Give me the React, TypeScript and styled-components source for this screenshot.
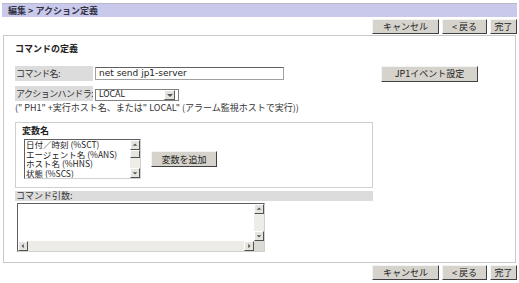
import styled, { createGlobalStyle } from "styled-components";

const GlobalStyle = createGlobalStyle`
  html, body {
    margin: 0;
    padding: 0;
    background: #ffffff;
  }
  body {
    font-family: "Noto Sans CJK JP", "DejaVu Sans", sans-serif;
    font-size: 9px;
    color: #333333;
  }
`;

const variables = ["日付／時刻 (%SCT)", "エージェント名 (%ANS)", "ホスト名 (%HNS)", "状態 (%SCS)"];

const Arrow = ({ dir }: { dir: "up" | "down" | "left" | "right" }) => {
  const pts = {
    up: "1,5 4,2 7,5",
    down: "1,3 4,6 7,3",
    left: "5,1 2,4 5,7",
    right: "3,1 6,4 3,7",
  }[dir];
  return (
    <svg width="8" height="8" viewBox="0 0 8 8">
      <polygon points={pts} fill="#555" />
    </svg>
  );
};

const ButtonBar = () => (
  <ButtonRow>
    <Button $w={67}>キャンセル</Button>
    <Button $w={45}>&lt; 戻る</Button>
    <Button $w={27}>完了</Button>
  </ButtonRow>
);

const App = () => {
  return (
    <Page>
      <GlobalStyle />
      <TitleBar>編集 &gt; アクション定義</TitleBar>
      <ButtonBar />
      <Panel>
        <SectionTitle>コマンドの定義</SectionTitle>
        <FieldRow $top={11}>
          <Label>コマンド名:</Label>
          <TextInput>net send jp1-server</TextInput>
          <Spacer />
          <Button $w={97} $h={16}>JP1イベント設定</Button>
        </FieldRow>
        <FieldRow $top={5}>
          <Label>アクションハンドラ:</Label>
          <Select>
            <span>LOCAL</span>
            <DropButton>
              <Arrow dir="down" />
            </DropButton>
          </Select>
        </FieldRow>
        <Note>(" PH1" +実行ホスト名、または" LOCAL" (アラーム監視ホストで実行))</Note>
        <VarBox>
          <VarTitle>変数名</VarTitle>
          <VarRow>
            <ListBox>
              <ListItems>
                {variables.map((v) => (
                  <ListItem key={v}>{v}</ListItem>
                ))}
              </ListItems>
              <VScroll>
                <ScrollBtn>
                  <Arrow dir="up" />
                </ScrollBtn>
                <Thumb />
                <Track />
                <ScrollBtn>
                  <Arrow dir="down" />
                </ScrollBtn>
              </VScroll>
            </ListBox>
            <Button $w={66} $h={16}>変数を追加</Button>
          </VarRow>
        </VarBox>
        <ArgLabel>コマンド引数:</ArgLabel>
        <TextArea>
          <TextAreaMain>
            <TextAreaBody />
            <VScroll>
              <ScrollBtn>
                <Arrow dir="up" />
              </ScrollBtn>
              <Track />
              <ScrollBtn>
                <Arrow dir="down" />
              </ScrollBtn>
            </VScroll>
          </TextAreaMain>
          <HScroll>
            <ScrollBtn>
              <Arrow dir="left" />
            </ScrollBtn>
            <Track />
            <ScrollBtn>
              <Arrow dir="right" />
            </ScrollBtn>
            <Corner />
          </HScroll>
        </TextArea>
      </Panel>
      <ButtonBar />
    </Page>
  );
};

export default App;

const Page = styled.div`
  width: 515px;
  padding: 3px 2px 0 2px;
`;

const TitleBar = styled.div`
  height: 14px;
  box-sizing: border-box;
  background: #c9c9ec;
  border-top: 1px solid #b8b8c8;
  padding-left: 6px;
  font-weight: bold;
  line-height: 13px;
  color: #333344;
`;

const ButtonRow = styled.div`
  display: flex;
  justify-content: flex-end;
  gap: 3px;
  margin-top: 2px;
  height: 15px;
`;

const Button = styled.div<{ $w: number; $h?: number }>`
  width: ${(p) => p.$w}px;
  height: ${(p) => p.$h ?? 15}px;
  box-sizing: border-box;
  background: #d6d3cc;
  border: 1px solid;
  border-color: #f4f4f4 #404040 #404040 #f4f4f4;
  display: flex;
  align-items: center;
  justify-content: center;
  color: #222;
  white-space: nowrap;
`;

const Panel = styled.div`
  margin: 1px 1px 0 1px;
  height: 228px;
  box-sizing: border-box;
  border: 1px solid #c8c8c8;
  padding: 0 11px;
`;

const SectionTitle = styled.div`
  margin-top: 7px;
  font-weight: bold;
  line-height: 12px;
  color: #222;
`;

const FieldRow = styled.div<{ $top: number }>`
  display: flex;
  align-items: center;
  margin-top: ${(p) => p.$top}px;
  height: 15px;
  padding-right: 26px;
`;

const Label = styled.div`
  width: 78px;
  height: 15px;
  flex: none;
  box-sizing: border-box;
  background: #dcdcdc;
  padding-left: 1px;
  line-height: 15px;
  letter-spacing: -0.6px;
  color: #333;
  margin-right: 2px;
  white-space: nowrap;
  overflow: hidden;
`;

const TextInput = styled.div`
  width: 189px;
  height: 13px;
  box-sizing: border-box;
  border: 1px solid #a0a0a0;
  border-top-color: #606060;
  padding-left: 3px;
  font-family: "DejaVu Sans", sans-serif;
  font-size: 9px;
  line-height: 11px;
  color: #222;
`;

const Spacer = styled.div`
  flex: 1;
`;

const Select = styled.div`
  width: 84px;
  height: 12px;
  box-sizing: border-box;
  border: 1px solid #808080;
  margin-top: 2px;
  display: flex;
  align-items: center;
  justify-content: space-between;
  padding-left: 3px;
  font-family: "DejaVu Sans", sans-serif;
  font-size: 8px;
  color: #222;
`;

const DropButton = styled.div`
  width: 11px;
  height: 10px;
  box-sizing: border-box;
  margin-right: 3px;
  background: #e4e2dc;
  border: 1px solid;
  border-color: #fff #606060 #606060 #fff;
  display: flex;
  align-items: center;
  justify-content: center;
`;

const Note = styled.div`
  margin-top: 1px;
  line-height: 12px;
  white-space: nowrap;
  color: #333;
`;

const VarBox = styled.div`
  width: 358px;
  height: 66px;
  box-sizing: border-box;
  margin-top: 8px;
  border: 1px solid #cfcfcf;
  padding: 2px 6px 0 6px;
`;

const VarTitle = styled.div`
  font-weight: bold;
  line-height: 12px;
  color: #222;
`;

const VarRow = styled.div`
  display: flex;
  align-items: center;
  gap: 10px;
  margin-top: 2px;
  margin-left: 2px;
`;

const ListBox = styled.div`
  width: 117px;
  height: 40px;
  box-sizing: border-box;
  border: 1px solid;
  border-color: #606060 #d0d0d0 #d0d0d0 #606060;
  display: flex;
  background: #fff;
`;

const ListItems = styled.div`
  flex: 1;
  padding-left: 1px;
  overflow: hidden;
`;

const ListItem = styled.div`
  line-height: 9.5px;
  height: 9.5px;
  font-size: 8.5px;
  white-space: nowrap;
  color: #222;
`;

const VScroll = styled.div`
  width: 10px;
  display: flex;
  flex-direction: column;
  background: #eceae4;
`;

const ScrollBtn = styled.div`
  width: 10px;
  height: 10px;
  flex: none;
  box-sizing: border-box;
  background: #e6e4de;
  border: 1px solid;
  border-color: #fff #505050 #505050 #fff;
  display: flex;
  align-items: center;
  justify-content: center;
  svg {
    width: 6px;
    height: 6px;
  }
`;

const Thumb = styled.div`
  height: 8px;
  box-sizing: border-box;
  background: #e6e4de;
  border: 1px solid;
  border-color: #fff #505050 #505050 #fff;
`;

const Track = styled.div`
  flex: 1;
  background: #eeece6;
`;

const ArgLabel = styled.div`
  width: 358px;
  height: 10px;
  margin-top: 3px;
  background: #dcdcdc;
  line-height: 10px;
  padding-left: 1px;
  box-sizing: border-box;
  color: #333;
`;

const TextArea = styled.div`
  width: 248px;
  height: 49px;
  box-sizing: border-box;
  margin: 2px 0 0 2px;
  border: 1px solid;
  border-color: #606060 #d0d0d0 #d0d0d0 #606060;
  display: flex;
  flex-direction: column;
`;

const TextAreaMain = styled.div`
  flex: 1;
  display: flex;
`;

const TextAreaBody = styled.div`
  flex: 1;
  background: #fff;
`;

const HScroll = styled.div`
  height: 10px;
  display: flex;
  background: #eceae4;
`;

const Corner = styled.div`
  width: 10px;
  background: #dcdad4;
`;
